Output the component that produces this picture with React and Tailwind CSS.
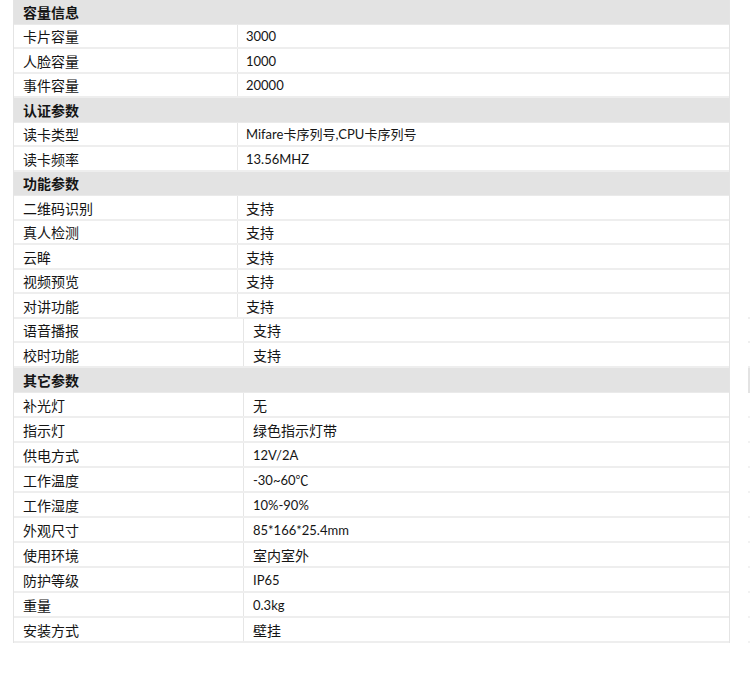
import React from "react";

const sections = [
    {
        title: "容量信息",
        rows: [
            ["卡片容量", "3000"],
            ["人脸容量", "1000"],
            ["事件容量", "20000"],
        ],
    },
    {
        title: "认证参数",
        rows: [
            ["读卡类型", "Mifare卡序列号,CPU卡序列号"],
            ["读卡频率", "13.56MHZ"],
        ],
    },
    {
        title: "功能参数",
        rows: [
            ["二维码识别", "支持"],
            ["真人检测", "支持"],
            ["云眸", "支持"],
            ["视频预览", "支持"],
            ["对讲功能", "支持"],
            ["语音播报", "支持", true],
            ["校时功能", "支持", true],
        ],
    },
    {
        title: "其它参数",
        tall: true,
        rows: [
            ["补光灯", "无", true],
            ["指示灯", "绿色指示灯带", true],
            ["供电方式", "12V/2A", true],
            ["工作温度", "-30~60℃", true],
            ["工作湿度", "10%-90%", true],
            ["外观尺寸", "85*166*25.4mm", true],
            ["使用环境", "室内室外", true],
            ["防护等级", "IP65", true],
            ["重量", "0.3kg", true],
            ["安装方式", "壁挂", true],
        ],
    },
];

const font = { fontFamily: '"Lato", "Noto Sans CJK SC", sans-serif' };

function Row({ label, value, wide, tall }) {
    // chinese-only values are set a bit bigger than the latin ones
    const cjk = !/[A-Za-z0-9]/.test(value);
    return (
        <div
            className={`flex border-b-2 border-[#eeeeee] bg-white ${tall ? "h-[25px]" : "h-[24.5px]"}`}
        >
            <div
                className={`flex items-center pt-[2px] pl-[9px] border-r border-[#e6e6e6] text-[14px] ${wide ? "w-[230px]" : "w-[224px]"}`}
            >
                {label}
            </div>
            <div
                className={`flex items-center pt-[2px] ${cjk ? "text-[14px]" : "text-[13px]"} ${wide ? "pl-[9px]" : "pl-[8px]"}`}
            >
                {value}
            </div>
        </div>
    );
}

export default function App() {
    return (
        <div className="flex w-[750px] h-[692px] bg-white text-[#151515]" style={font}>
            <div className="ml-[13px] w-[717px]">
                <div className="border-l border-r border-[#e4e4e4]">
                    {sections.map((s) => (
                        <div key={s.title}>
                            <div
                                className={`flex items-center pt-[1px] bg-[#e3e3e3] pl-[9px] text-[14px] font-bold border-b border-[#eaeaea] ${s.tall ? "h-[25.5px]" : "h-[24.5px]"}`}
                            >
                                {s.title}
                            </div>
                            {s.rows.map(([label, value, wide]) => (
                                <Row
                                    key={label}
                                    label={label}
                                    value={value}
                                    wide={wide}
                                    tall={s.tall}
                                />
                            ))}
                        </div>
                    ))}
                </div>
            </div>
            <div className="ml-auto w-[2px] pt-[294px]">
                {Array.from({ length: 3 }).map((_, i) => (
                    <div key={i} className="h-[24.5px] border-b-2 border-[#efefef]"></div>
                ))}
                <div className="h-[25.5px] bg-[#e3e3e3]"></div>
                {Array.from({ length: 10 }).map((_, i) => (
                    <div key={i} className="h-[25px] border-b-2 border-[#f2f2f2]"></div>
                ))}
            </div>
        </div>
    );
}
